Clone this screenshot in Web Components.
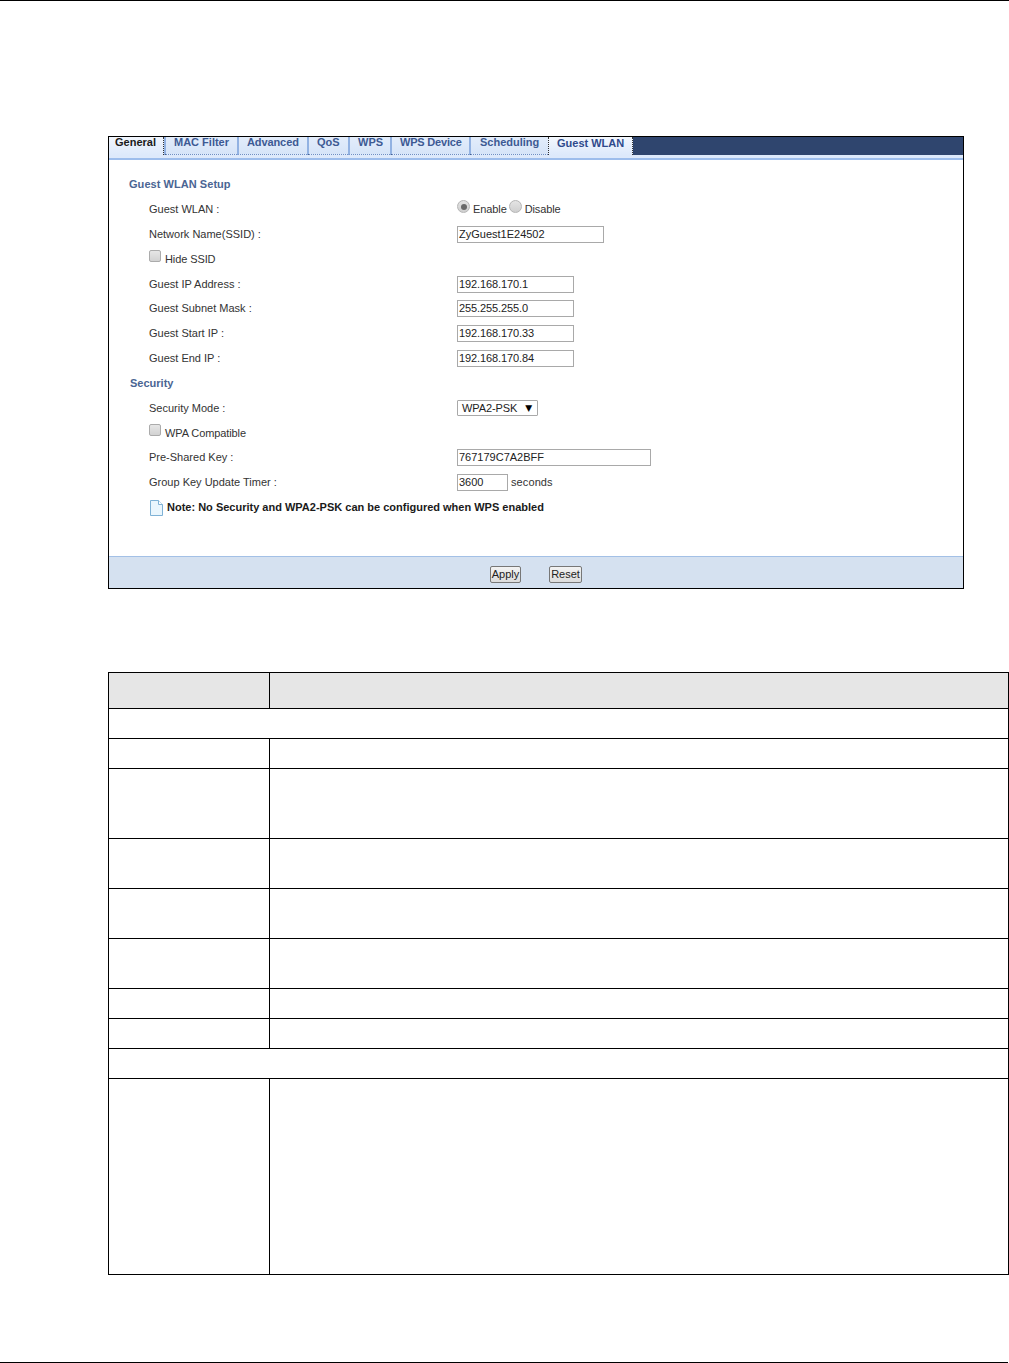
<!DOCTYPE html>
<html><head><meta charset="utf-8">
<style>
html,body{margin:0;padding:0;background:#fff}
body{font:11px "Liberation Sans",Arial,sans-serif;color:#333}
</style></head>
<body>
<z-page>
  <z-panel>
    <z-tab slot="tabs" w="55" state="first">General</z-tab>
    <z-tab slot="tabs" w="73">MAC Filter</z-tab>
    <z-tab slot="tabs" w="70" style="letter-spacing:-.1px">Advanced</z-tab>
    <z-tab slot="tabs" w="41">QoS</z-tab>
    <z-tab slot="tabs" w="42">WPS</z-tab>
    <z-tab slot="tabs" w="79" style="letter-spacing:-.2px">WPS Device</z-tab>
    <z-tab slot="tabs" w="79" state="wide">Scheduling</z-tab>
    <z-tab slot="tabs" w="85" state="active">Guest WLAN</z-tab>

    <z-heading style="letter-spacing:.05px">Guest WLAN Setup</z-heading>
    <z-row label="Guest WLAN :"><z-radio checked>Enable</z-radio><z-radio>Disable</z-radio></z-row>
    <z-row label="Network Name(SSID) :"><z-field w="147">ZyGuest1E24502</z-field></z-row>
    <z-row><z-check slot="label">Hide SSID</z-check></z-row>
    <z-row label="Guest IP Address :"><z-field w="117" ip>192.168.170.1</z-field></z-row>
    <z-row label="Guest Subnet Mask :"><z-field w="117" ip>255.255.255.0</z-field></z-row>
    <z-row label="Guest Start IP :"><z-field w="117" ip>192.168.170.33</z-field></z-row>
    <z-row label="Guest End IP :"><z-field w="117" ip>192.168.170.84</z-field></z-row>
    <z-heading indent>Security</z-heading>
    <z-row label="Security Mode :"><z-select>WPA2-PSK</z-select></z-row>
    <z-row><z-check slot="label" style="padding-top:2px">WPA Compatible</z-check></z-row>
    <z-row label="Pre-Shared Key :"><z-field w="194">767179C7A2BFF</z-field></z-row>
    <z-row label="Group Key Update Timer :"><z-field w="51">3600</z-field><z-unit>seconds</z-unit></z-row>
    <z-note>Note: No Security and WPA2-PSK can be configured when WPS enabled</z-note>

    <z-btn slot="footer" w="31">Apply</z-btn>
    <z-btn slot="footer" w="33">Reset</z-btn>
  </z-panel>
  <z-grid></z-grid>
</z-page>
<script>
function def(name, css, html, init){
  customElements.define(name, class extends HTMLElement{
    constructor(){super();this.attachShadow({mode:'open'}).innerHTML='<style>'+css+'</style>'+html;}
    connectedCallback(){ if(init) init(this,this.shadowRoot); }
  });
}
def('z-page',
 `:host{display:flex;flex-direction:column;height:1363px;box-sizing:border-box;border-top:1px solid #000;overflow:hidden}
  .bottom{margin-top:auto;height:1px;background:#000;width:1008px}`,
 `<slot></slot><div class="bottom"></div>`);
def('z-panel',
 `:host{display:flex;flex-direction:column;box-sizing:border-box;width:856px;height:453px;margin:135px 0 0 108px;border:1px solid #000;background:#fff}
  .tabs{display:flex;height:18px;background:#2f456e;flex:none}
  .strip{height:3px;background:#dde9fb;border-bottom:2px solid #9dbdec;flex:none}
  .form{flex:1;padding:11.8px 0 0 20px;display:flex;flex-direction:column}
  .foot{flex:none;box-sizing:border-box;height:32px;background:#d5e1f0;border-top:1px solid #a3c0e6;display:flex;align-items:center;padding:3px 0 0 381px;gap:28px}`,
 `<div class="tabs"><slot name="tabs"></slot></div><div class="strip"></div><div class="form"><slot></slot></div><div class="foot"><slot name="footer"></slot></div>`);
def('z-tab',
 `:host{display:block;box-sizing:border-box;height:18px;flex:none;font-weight:bold;font-size:11px;line-height:11px;padding:0 0 0 8px;color:#3d5a94;white-space:nowrap;
    background:linear-gradient(#e3edfb,#d6e4f8);border-left:2px solid #92b2e2;border-bottom:1px dotted #6f8fc4}
  :host([state=wide]){padding-left:9px}
  :host([state=first]){background:linear-gradient(#f2f6fd,#dde9fb);color:#1a1a1a;border-left:0;padding-left:6px;border-bottom:0;border-right:1px dotted #333}
  :host([state=active]){background:linear-gradient(#f4f8fe,#dde9fb);color:#2f4a8c;line-height:12px;padding-left:8px;border-left:1px dotted #333;border-right:1px dotted #333;border-bottom:0}`,
 `<slot></slot>`,
 (el)=>{el.style.width=el.getAttribute('w')+'px';});
def('z-heading',
 `:host{display:block;box-sizing:border-box;height:24.83px;line-height:24.83px;font-weight:bold;color:#4a6593;font-size:11px}
  :host([indent]){padding:1px 0 0 1px}`,
 `<slot></slot>`);
def('z-row',
 `:host{display:grid;grid-template-columns:308px 1fr;height:24.83px;align-items:center;padding-left:20px;color:#333;font-size:11px}
  .c{display:flex;align-items:center;padding-top:1px}`,
 `<div><span id="l"></span><slot name="label"></slot></div><div class="c"><slot></slot></div>`,
 (el,sr)=>{sr.getElementById('l').textContent=el.getAttribute('label')||'';});
def('z-field',
 `:host{display:block;box-sizing:border-box;height:17px;border:1px solid #a9a9a9;background:#fff;padding-left:1px;line-height:15px;color:#222;font-size:11px;white-space:nowrap;overflow:hidden}
  :host([ip]){letter-spacing:-.1px}`,
 `<slot></slot>`,
 (el)=>{el.style.width=el.getAttribute('w')+'px';});
def('z-unit',`:host{display:block;margin:0 0 2px 3px;color:#333;letter-spacing:.1px}`,`<slot></slot>`);
def('z-radio',
 `:host{display:flex;align-items:flex-start;color:#333;letter-spacing:-.1px;margin-top:-5px}
  i{display:block;box-sizing:border-box;width:13px;height:13px;border-radius:50%;border:1px solid #b5b5b5;background:linear-gradient(#e4e4e4,#cfcfcf);margin:1px 3px 0 0;position:relative}
  :host([checked]) i::after{content:"";position:absolute;left:2.5px;top:2.5px;width:6px;height:6px;border-radius:50%;background:#6a6a6a}
  span{margin:4px 2px 0 0}`,
 `<i></i><span><slot></slot></span>`);
def('z-check',
 `:host{display:flex;align-items:center;color:#333;letter-spacing:-.1px}
  i{display:block;box-sizing:border-box;width:12px;height:12px;border-radius:2px;border:1px solid #ababab;background:linear-gradient(#e6e6e6,#d2d2d2);margin:-6px 4px 0 0}`,
 `<i></i><span><slot></slot></span>`);
def('z-select',
 `:host{display:flex;align-items:center;justify-content:space-between;box-sizing:border-box;width:81px;height:16px;border:1px solid #a9a9a9;border-radius:1px;padding:0 5px 0 4px;color:#222;font-size:11px;background:#fff;letter-spacing:-.1px}
  b{font-size:9px;font-weight:normal;color:#000;font-family:"DejaVu Sans",sans-serif}`,
 `<span><slot></slot></span><b>▼</b>`);
def('z-note',
 `:host{display:flex;align-items:center;height:24.83px;padding-left:20px;font-weight:bold;color:#1a1a1a;font-size:11px}
  svg{display:block;margin:2px 4px 0 1px;flex:none}`,
 `<svg width="13" height="16" viewBox="0 0 13 16"><path d="M.5.5H8.5L12.5 4.5V15.5H.5Z" fill="#eaf6fd" stroke="#7fb2d6"/><path d="M8.5.5V4.5H12.5" fill="#fff" stroke="#7fb2d6"/></svg><span><slot></slot></span>`);
def('z-btn',
 `:host{display:block;box-sizing:border-box;height:17px;line-height:15px;border:1px solid #777;border-radius:2px;background:linear-gradient(#f3f3f3,#dcdcdc);color:#222;font-size:11px;text-align:center}`,
 `<slot></slot>`,
 (el)=>{el.style.width=el.getAttribute('w')+'px';});
def('z-grid',
 `:host{display:grid;box-sizing:border-box;width:901px;margin:83px 0 0 108px;border-top:1px solid #000;border-left:1px solid #000;
    grid-template-columns:161px 739px;grid-template-rows:36px 30px 30px 70px 50px 50px 50px 30px 30px 30px 196px}
  div{border-right:1px solid #000;border-bottom:1px solid #000;box-sizing:border-box}
  .h{background:#e6e6e6}.w{grid-column:1/3}`,
 `<div class="h"></div><div class="h"></div><div class="w"></div>`+
 `<div></div><div></div><div></div><div></div><div></div><div></div><div></div><div></div><div></div><div></div><div></div><div></div><div></div><div></div><div class="w"></div><div></div><div></div>`);
</script>
</body></html>
